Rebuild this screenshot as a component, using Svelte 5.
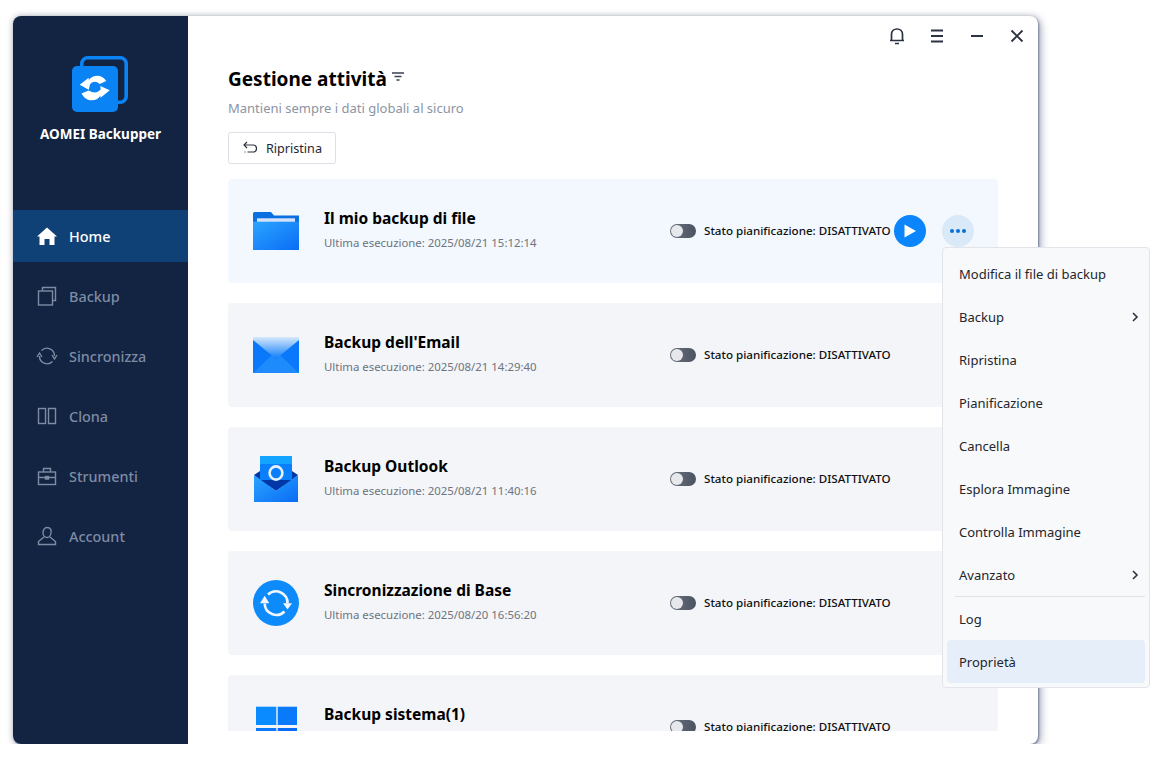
<script>
  const nav = [
    { label: 'Home', icon: 'home', active: true },
    { label: 'Backup', icon: 'backup' },
    { label: 'Sincronizza', icon: 'sync' },
    { label: 'Clona', icon: 'clone' },
    { label: 'Strumenti', icon: 'tools' },
    { label: 'Account', icon: 'user' }
  ];
  const tasks = [
    { title: 'Il mio backup di file', time: '2025/08/21 15:12:14', icon: 'folder', active: true },
    { title: "Backup dell'Email", time: '2025/08/21 14:29:40', icon: 'mail' },
    { title: 'Backup Outlook', time: '2025/08/21 11:40:16', icon: 'outlook' },
    { title: 'Sincronizzazione di Base', time: '2025/08/20 16:56:20', icon: 'syncb' },
    { title: 'Backup sistema(1)', time: '', icon: 'win' }
  ];
  const menu = [
    { label: 'Modifica il file di backup' },
    { label: 'Backup', arrow: true },
    { label: 'Ripristina' },
    { label: 'Pianificazione' },
    { label: 'Cancella' },
    { label: 'Esplora Immagine' },
    { label: 'Controlla Immagine' },
    { label: 'Avanzato', arrow: true, sep: true },
    { label: 'Log' },
    { label: 'Proprietà', hover: true }
  ];
</script>

<div class="window">
  <aside class="sidebar">
    <svg class="logo" width="58" height="58" viewBox="0 0 58 58">
      <rect x="10.8" y="2.8" width="44.4" height="44.4" rx="6" fill="none" stroke="#0a84f5" stroke-width="3.6"/>
      <rect x="1" y="11" width="46" height="46" rx="5" fill="#0a84f5"/>
      <path d="M8.7 29.7 L17.7 22.7 L17.7 25 C23 19 31 19.5 35.3 26 L28.7 29 C25 25.5 21 26.5 19 29.5 L17.7 34.7 Z" fill="#fff"/>
      <path d="M38.7 35.3 L29.3 31 L29.7 34.5 C26 38.5 22 38 17.7 35.5 L10.5 38.5 C15 47 25 47.5 29.7 40.5 L29.3 43 Z" fill="#fff"/>
    </svg>
    <div class="brand">AOMEI Backupper</div>
    <nav class="nav">
      {#each nav as item}
        <div class="nav-item" class:active={item.active}>
          <svg class="nav-icon" width="22" height="22" viewBox="0 0 22 22" fill="none" stroke="currentColor" stroke-width="1.4">
            {#if item.icon === 'home'}
              <path d="M11 2.5 L1 11.5 L3.5 11.5 L3.5 20 L8.5 20 L8.5 14 L13.5 14 L13.5 20 L18.5 20 L18.5 11.5 L21 11.5 Z" fill="#fff" stroke="none"/>
            {:else if item.icon === 'backup'}
              <path d="M6.5 5.5 V2.5 H19.5 V15.5 H17"/><rect x="2.5" y="6" width="14" height="14"/>
            {:else if item.icon === 'sync'}
              <path d="M5.5 5.5 A7.6 7.6 0 0 1 18.5 11 M16.5 16.5 A7.6 7.6 0 0 1 3.5 11"/>
              <path d="M16 10 L18.5 14 L21 10 M1 12 L3.5 8 L6 12" stroke-width="1.4"/>
            {:else if item.icon === 'clone'}
              <rect x="2.5" y="3.5" width="7" height="15"/><path d="M12.5 3.5 H19.5 V18.5 H12.5 Z"/>
            {:else if item.icon === 'tools'}
              <rect x="2.5" y="7" width="17" height="12.5"/><path d="M7.5 7 V3.5 H14.5 V7 M2.5 12.5 H19.5"/><rect x="9.5" y="11.5" width="3" height="2.5" fill="currentColor"/>
            {:else}
              <path d="M11 2.5 C15 2.5 15.5 5.5 15 8 C14.5 11 12.5 12.5 11 12.5 C9 12.5 7 10.5 7 7.5 C7 5 8.5 2.5 11 2.5 Z M8 12 L2.5 16.5 V19.5 H19.5 V16.5 L14 12"/>
            {/if}
          </svg>
          <span>{item.label}</span>
        </div>
      {/each}
    </nav>
  </aside>

  <main class="main">
    <div class="titlebar">
      <svg width="20" height="20" viewBox="0 0 20 20" fill="none" stroke="#2c3340" stroke-width="1.7">
        <path d="M4.5 14.5 V8.5 C4.5 5 7 3 10 3 C13 3 15.5 5 15.5 8.5 V14.5 M3 14.5 H17"/><path d="M8 17.5 H12" stroke-width="1.6"/>
      </svg>
      <svg width="20" height="20" viewBox="0 0 20 20" fill="none" stroke="#2c3340" stroke-width="1.8">
        <path d="M4 4.5 H16 M4 10 H16 M4 15.5 H16"/>
      </svg>
      <svg width="20" height="20" viewBox="0 0 20 20" fill="none" stroke="#2c3340" stroke-width="1.8">
        <path d="M4 10 H16"/>
      </svg>
      <svg width="20" height="20" viewBox="0 0 20 20" fill="none" stroke="#2c3340" stroke-width="1.9">
        <path d="M4.5 4.5 L15.5 15.5 M15.5 4.5 L4.5 15.5"/>
      </svg>
    </div>

    <div class="head">
      <div class="title-row">
        <h1>Gestione attività</h1>
        <svg width="14" height="12" viewBox="0 0 14 12" fill="none" stroke="#3a4250" stroke-width="1.3">
          <path d="M1 2 H13 M3.5 5.5 H10.5 M5.5 9 H8.5"/>
        </svg>
      </div>
      <p class="sub">Mantieni sempre i dati globali al sicuro</p>
      <div class="restore">
        <svg width="16" height="14" viewBox="0 0 16 14" fill="none" stroke="#2c3340" stroke-width="1.2">
          <path d="M2 4 H11 C13.2 4 14.5 5.7 14.5 7.5 C14.5 9.3 13.2 11 11 11 H5.5"/><path d="M5 1 L2 4 L5 7"/><path d="M2.5 11 H4" stroke-dasharray="1 1"/>
        </svg>
        <span>Ripristina</span>
      </div>
    </div>

    <div class="list">
      {#each tasks as t}
        <section class="card" class:on={t.active}>
          <svg class="task-icon" width="46" height="46" viewBox="0 0 46 46">
            <defs>
              <linearGradient id={'g-' + t.icon} x1="0" y1="0" x2="1" y2="1">
                <stop offset="0" stop-color="#2aa5ff"/><stop offset="1" stop-color="#0a6cf5"/>
              </linearGradient>
              <linearGradient id={'s-' + t.icon} x1="0" y1="0" x2="0" y2="1">
                <stop offset="0" stop-color="#d6e8fc"/><stop offset="1" stop-color="#0a7cf8"/>
              </linearGradient>
            </defs>
            {#if t.icon === 'folder'}
              <path d="M0 5.5 C0 4.8 .8 4 1.5 4 H18 L21 7.5 H46 V15 H0 Z" fill="#0a6fe0"/>
              <rect x="4" y="10.3" width="38" height="4" fill="#d3e2f8"/>
              <rect x="0" y="13.7" width="46" height="28.3" fill={'url(#g-' + t.icon + ')'}/>
            {:else if t.icon === 'mail'}
              <rect x="0" y="5" width="46" height="36" fill="#0a78fb"/>
              <path d="M0 41 L19 23 L27 23 L46 41 Z" fill="#1d8bfb"/>
              <path d="M0 5 H46 V8 L23 27 L0 8 Z" fill={'url(#s-' + t.icon + ')'}/>
            {:else if t.icon === 'outlook'}
              <rect x="7" y="0" width="32" height="30" fill="#0a7ffb"/>
              <rect x="7" y="0" width="32" height="8" fill="#12a4ff"/>
              <path d="M1 19 L7 15 V24 Z M45 19 L39 15 V24 Z" fill="#0038a8"/>
              <path d="M7 24 L23 35 L39 24 Z" fill="#0038a8"/>
              <ellipse cx="23" cy="17" rx="6.4" ry="6.6" fill="none" stroke="#e8f2ff" stroke-width="2.6"/>
              <path d="M1 19 L23 35 L45 19 V46 H1 Z" fill={'url(#g-' + t.icon + ')'}/>
            {:else if t.icon === 'syncb'}
              <circle cx="23" cy="23" r="23" fill="#0d8bfa"/>
              <path d="M15 14.5 A11.6 11.6 0 0 1 34.5 23.5 M31.5 31.5 A11.6 11.6 0 0 1 11.7 23.5" fill="none" stroke="#f2f7ff" stroke-width="2.6"/>
              <path d="M30 23.3 L39 23.3 L34.5 29.5 Z M7 23.3 L16.3 23.3 L11.7 15.7 Z" fill="#f2f7ff"/>
            {:else}
              <rect x="3" y="2.7" width="20.3" height="18.3" fill="#0a8bff"/>
              <rect x="24.7" y="2.7" width="19.3" height="18.3" fill="#0a7afa"/>
              <rect x="3" y="24" width="20.3" height="18.3" fill="#0a7afa"/>
              <rect x="24.7" y="24" width="19.3" height="18.3" fill="#0a6cf5"/>
            {/if}
          </svg>
          <div class="info">
            <div class="name">{t.title}</div>
            <div class="time">{t.time ? 'Ultima esecuzione: ' + t.time : ''}</div>
          </div>
          <div class="status">
            <span class="toggle"><i></i></span>
            <span class="state">Stato pianificazione: DISATTIVATO</span>
            {#if t.active}
              <span class="play">
                <svg width="14" height="14" viewBox="0 0 14 14"><path d="M1.5 0.5 L13 7 L1.5 13.5 Z" fill="#fff"/></svg>
              </span>
              <span class="more"><b></b><b></b><b></b></span>
            {/if}
          </div>
        </section>
      {/each}
    </div>
  </main>
</div>

<div class="menu">
  {#each menu as m}
    <div class="menu-item" class:hover={m.hover} class:sep={m.sep}>
      <span>{m.label}</span>
      {#if m.arrow}
        <svg width="8" height="10" viewBox="0 0 8 10" fill="none" stroke="#2c3340" stroke-width="1.6"><path d="M2 1 L6 5 L2 9"/></svg>
      {/if}
    </div>
  {/each}
</div>

<style>
  :global(body) {
    margin: 0;
    background: #fff;
    font-family: "Noto Sans", "Open Sans", sans-serif;
  }
  .window {
    display: flex;
    width: 1025px;
    height: 728px;
    margin: 16px 0 0 13px;
    border-radius: 8px;
    overflow: hidden;
    background: #fff;
    box-shadow: 1px 1px 2px rgba(70, 80, 115, .55), 3px 3px 8px rgba(80, 90, 125, .4), 0 0 6px rgba(80, 90, 125, .35);
  }
  .sidebar {
    width: 175px;
    flex: none;
    background: #132342;
    display: flex;
    flex-direction: column;
    align-items: center;
    color: #fff;
  }
  .logo { margin-top: 39px; margin-right: 2px; display: block; flex: none; }
  .brand {
    margin-top: 11px;
    font-size: 13.5px;
    font-weight: 700;
    line-height: 20px;
  }
  .nav { width: 100%; margin-top: 66px; display: flex; flex-direction: column; gap: 8px; }
  .nav-item {
    height: 52px;
    padding-left: 23px;
    display: flex;
    align-items: center;
    gap: 11px;
    color: #7e8ca3;
    font-size: 14.4px;
    font-weight: 500;
  }
  .nav-item.active { background: #0f4177; color: #fff; }
  .nav-icon { flex: none; }

  .main { flex: 1; min-width: 0; display: flex; flex-direction: column; padding-bottom: 13px; }
  .titlebar {
    height: 40px;
    flex: none;
    display: flex;
    justify-content: flex-end;
    align-items: center;
    gap: 20px;
    padding: 0 11px 0 0;
  }
  .head { padding: 0 40px; flex: none; }
  .title-row { display: flex; align-items: center; gap: 4px; margin-top: 9px; height: 28px; }
  h1 { margin: 0; font-size: 19px; line-height: 28px; font-weight: 700; color: #000; }
  .title-row svg { margin-top: -4px; }
  .sub { margin: 5px 0 0; font-size: 13px; line-height: 20px; color: #8b94a3; }
  .restore {
    margin-top: 14px;
    width: 108px;
    height: 32px;
    box-sizing: border-box;
    border: 1px solid #dcdfe5;
    border-radius: 3px;
    display: flex;
    align-items: center;
    padding-left: 13px;
    gap: 8px;
    font-size: 12.6px;
    color: #1f2632;
  }
  .list {
    flex: 1;
    min-height: 0;
    margin: 15px 40px 0;
    overflow: hidden;
    display: flex;
    flex-direction: column;
    gap: 20px;
  }
  .card {
    flex: none;
    height: 104px;
    border-radius: 4px;
    background: #f4f5f8;
    display: flex;
    align-items: center;
    padding-left: 25px;
  }
  .card.on { background: #f2f8fe; }
  .task-icon { flex: none; }
  .info { width: 346px; margin-left: 25px; flex: none; padding-bottom: 3px; }
  .name { font-size: 15.5px; font-weight: 700; color: #000; line-height: 20px; }
  .time { margin-top: 6px; min-height: 18px; font-size: 11.4px; line-height: 18px; color: #6c7480; }
  .status { display: flex; align-items: center; }
  .toggle {
    width: 26px;
    height: 14px;
    border-radius: 7px;
    background: linear-gradient(90deg, #6b7280, #4b5360);
    position: relative;
    flex: none;
  }
  .toggle i {
    position: absolute;
    left: 1px;
    top: 1px;
    width: 12px;
    height: 12px;
    border-radius: 50%;
    background: #e6e8ec;
  }
  .state { margin-left: 8px; padding-bottom: 2px; font-size: 11.6px; font-weight: 500; color: #101010; white-space: nowrap; width: 190px; }
  .play, .more {
    width: 32px;
    height: 32px;
    border-radius: 50%;
    flex: none;
    display: flex;
    align-items: center;
    justify-content: center;
  }
  .play { background: #0a85fb; }
  .more { background: #d9e9f8; margin-left: 16px; gap: 2px; }
  .more b { width: 4px; height: 4px; border-radius: 50%; background: #0a6fd8; }

  .menu {
    position: absolute;
    left: 942px;
    top: 247px;
    width: 208px;
    height: 441px;
    box-sizing: border-box;
    padding: 4px;
    background: #f8f9fb;
    border: 1px solid #e2e4e9;
    border-radius: 4px;
  }
  .menu-item {
    height: 43px;
    display: flex;
    align-items: center;
    justify-content: space-between;
    padding: 0 6px 0 12px;
    font-size: 13px;
    color: #23262d;
    border-radius: 4px;
    box-sizing: border-box;
    position: relative;
  }
  .menu-item.sep::after {
    content: "";
    position: absolute;
    left: 8px;
    right: 0;
    bottom: -1px;
    height: 1px;
    background: #e2e4e9;
  }
  .menu-item.sep { margin-bottom: 1px; }
  .menu-item.hover { background: #e6eff9; }
</style>
